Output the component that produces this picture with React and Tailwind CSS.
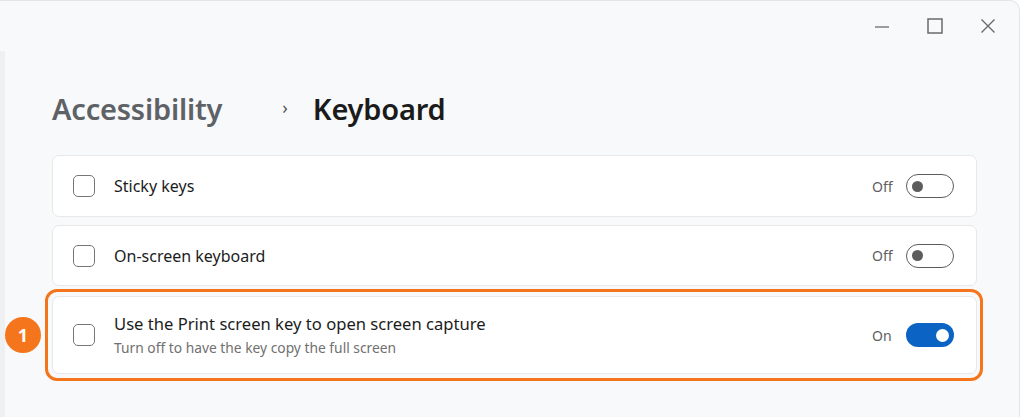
import React from "react";

function Toggle({ on }) {
  if (on) {
    return (
      <div className="w-[48px] h-[24px] rounded-full bg-[#0b63c4] flex items-center justify-end pr-[5px]">
        <div className="w-[13px] h-[13px] rounded-full bg-white" />
      </div>
    );
  }
  return (
    <div className="w-[48px] h-[24px] rounded-full border-[1.5px] border-[#5c5c5c] flex items-center pl-[5px]">
      <div className="w-[11px] h-[11px] rounded-full bg-[#5c5c5c]" />
    </div>
  );
}

function Checkbox() {
  return <div className="w-[22px] h-[22px] rounded-[5px] border-[1.5px] border-[#767676] bg-white shrink-0" />;
}

function Card({ title, sub, on, h, big }) {
  return (
    <div
      className={`w-[925px] ${h} bg-white border border-[#e7e8ea] rounded-[7px] flex items-center pl-[20px] pr-[22px]`}
    >
      <Checkbox />
      <div className="ml-[19px] flex-1 flex flex-col">
        <span className={`${big ? "text-[16.6px]" : "text-[16px]"} leading-[20px] text-[#1c1c1c]`}>{title}</span>
        {sub && <span className="text-[13.8px] leading-[18px] mt-[5px] text-[#707070]">{sub}</span>}
      </div>
      <span className="text-[14px] text-[#5f5f5f] mr-[12px] w-[22px]">{on ? "On" : "Off"}</span>
      <Toggle on={on} />
    </div>
  );
}

export default function App() {
  return (
    <div
      className="w-[1024px] h-[417px] bg-white overflow-hidden"
      style={{ fontFamily: '"Noto Sans", "Open Sans", sans-serif' }}
    >
      <div className="w-[1020px] h-[417px] bg-[#f8f9fa] border-t border-r border-[#e4e5e7] rounded-tr-[10px] flex">
        <div className="w-[5px] mt-[50px] bg-[#eff0f2]" />
        <div className="flex-1 flex flex-col">
          <div className="h-[52px] flex justify-end items-start pt-[17px] pr-[23px] gap-[37px] text-[#6a6a6a]">
            <svg width="16" height="16" viewBox="0 0 16 16">
              <path d="M1 9h14" stroke="currentColor" strokeWidth="1.3" />
            </svg>
            <svg width="16" height="16" viewBox="0 0 16 16">
              <rect x="1" y="1" width="14" height="14" fill="none" stroke="currentColor" strokeWidth="1.5" />
            </svg>
            <svg width="16" height="16" viewBox="0 0 16 16">
              <path d="M1.5 1.5l13 13M14.5 1.5l-13 13" stroke="currentColor" strokeWidth="1.4" />
            </svg>
          </div>
          <div className="pl-[47px] mt-[36px] flex items-center h-[40px]">
            <span className="text-[29px] font-semibold text-[#5e6166] tracking-[-0.2px]">Accessibility</span>
            <span className="ml-[60px] text-[18px] text-[#555] -mt-[4px]">›</span>
            <span className="ml-[25px] text-[29px] font-semibold text-[#1b1b1b] tracking-[-0.2px]">Keyboard</span>
          </div>
          <div className="pl-[47px] mt-[26px] flex flex-col">
            <Card title="Sticky keys" h="h-[62px]" />
            <div className="mt-[8px]">
              <Card title="On-screen keyboard" h="h-[61px]" />
            </div>
            <div className="relative mt-[3px] -ml-[7px] w-[938px] border-[3px] border-[#f4751b] rounded-[12px] p-[4px]">
              <div className="absolute -left-[43px] top-1/2 -translate-y-1/2 w-[36px] h-[36px] rounded-full bg-[#f4751b] flex items-center justify-center text-white text-[18px] font-bold">
                1
              </div>
              <Card
                title="Use the Print screen key to open screen capture"
                sub="Turn off to have the key copy the full screen"
                on
                big
                h="h-[78px]"
              />
            </div>
          </div>
        </div>
      </div>
    </div>
  );
}
